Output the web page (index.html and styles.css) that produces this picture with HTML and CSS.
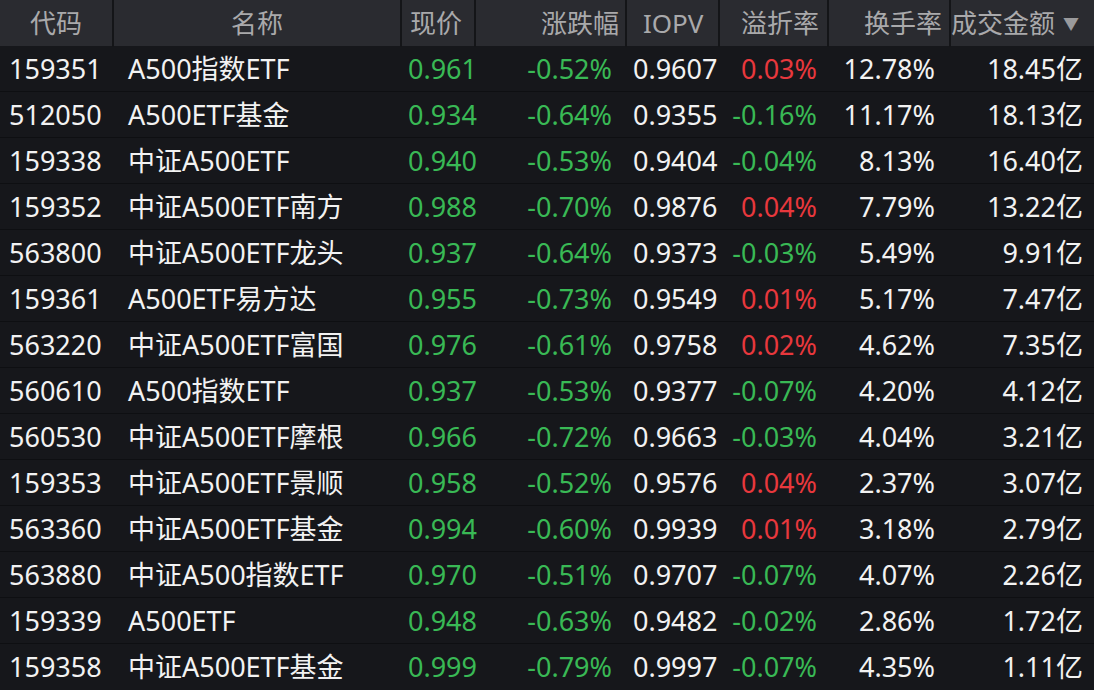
FILE: index.html
```html
<!DOCTYPE html>
<html lang="zh-CN">
<head>
<meta charset="utf-8">
<title>A500 ETF</title>
<link rel="stylesheet" href="styles.css">
</head>
<body>
<div class="table">
  <div class="row head">
    <div class="c code hc">代码</div>
    <div class="c name hc">名称</div>
    <div class="c price hl">现价</div>
    <div class="c chg hr">涨跌幅</div>
    <div class="c iopv hl">IOPV</div>
    <div class="c prem hr">溢折率</div>
    <div class="c turn hr">换手率</div>
    <div class="c amt hl">成交金额<span class="sort">▼</span></div>
  </div>
  <div class="row"><div class="c code">159351</div><div class="c name">A500指数ETF</div><div class="c price g">0.961</div><div class="c chg g">-0.52%</div><div class="c iopv">0.9607</div><div class="c prem r">0.03%</div><div class="c turn">12.78%</div><div class="c amt">18.45亿</div></div>
  <div class="row"><div class="c code">512050</div><div class="c name">A500ETF基金</div><div class="c price g">0.934</div><div class="c chg g">-0.64%</div><div class="c iopv">0.9355</div><div class="c prem g">-0.16%</div><div class="c turn">11.17%</div><div class="c amt">18.13亿</div></div>
  <div class="row"><div class="c code">159338</div><div class="c name">中证A500ETF</div><div class="c price g">0.940</div><div class="c chg g">-0.53%</div><div class="c iopv">0.9404</div><div class="c prem g">-0.04%</div><div class="c turn">8.13%</div><div class="c amt">16.40亿</div></div>
  <div class="row"><div class="c code">159352</div><div class="c name">中证A500ETF南方</div><div class="c price g">0.988</div><div class="c chg g">-0.70%</div><div class="c iopv">0.9876</div><div class="c prem r">0.04%</div><div class="c turn">7.79%</div><div class="c amt">13.22亿</div></div>
  <div class="row"><div class="c code">563800</div><div class="c name">中证A500ETF龙头</div><div class="c price g">0.937</div><div class="c chg g">-0.64%</div><div class="c iopv">0.9373</div><div class="c prem g">-0.03%</div><div class="c turn">5.49%</div><div class="c amt">9.91亿</div></div>
  <div class="row"><div class="c code">159361</div><div class="c name">A500ETF易方达</div><div class="c price g">0.955</div><div class="c chg g">-0.73%</div><div class="c iopv">0.9549</div><div class="c prem r">0.01%</div><div class="c turn">5.17%</div><div class="c amt">7.47亿</div></div>
  <div class="row"><div class="c code">563220</div><div class="c name">中证A500ETF富国</div><div class="c price g">0.976</div><div class="c chg g">-0.61%</div><div class="c iopv">0.9758</div><div class="c prem r">0.02%</div><div class="c turn">4.62%</div><div class="c amt">7.35亿</div></div>
  <div class="row"><div class="c code">560610</div><div class="c name">A500指数ETF</div><div class="c price g">0.937</div><div class="c chg g">-0.53%</div><div class="c iopv">0.9377</div><div class="c prem g">-0.07%</div><div class="c turn">4.20%</div><div class="c amt">4.12亿</div></div>
  <div class="row"><div class="c code">560530</div><div class="c name">中证A500ETF摩根</div><div class="c price g">0.966</div><div class="c chg g">-0.72%</div><div class="c iopv">0.9663</div><div class="c prem g">-0.03%</div><div class="c turn">4.04%</div><div class="c amt">3.21亿</div></div>
  <div class="row"><div class="c code">159353</div><div class="c name">中证A500ETF景顺</div><div class="c price g">0.958</div><div class="c chg g">-0.52%</div><div class="c iopv">0.9576</div><div class="c prem r">0.04%</div><div class="c turn">2.37%</div><div class="c amt">3.07亿</div></div>
  <div class="row"><div class="c code">563360</div><div class="c name">中证A500ETF基金</div><div class="c price g">0.994</div><div class="c chg g">-0.60%</div><div class="c iopv">0.9939</div><div class="c prem r">0.01%</div><div class="c turn">3.18%</div><div class="c amt">2.79亿</div></div>
  <div class="row"><div class="c code">563880</div><div class="c name">中证A500指数ETF</div><div class="c price g">0.970</div><div class="c chg g">-0.51%</div><div class="c iopv">0.9707</div><div class="c prem g">-0.07%</div><div class="c turn">4.07%</div><div class="c amt">2.26亿</div></div>
  <div class="row"><div class="c code">159339</div><div class="c name">A500ETF</div><div class="c price g">0.948</div><div class="c chg g">-0.63%</div><div class="c iopv">0.9482</div><div class="c prem g">-0.02%</div><div class="c turn">2.86%</div><div class="c amt">1.72亿</div></div>
  <div class="row"><div class="c code">159358</div><div class="c name">中证A500ETF基金</div><div class="c price g">0.999</div><div class="c chg g">-0.79%</div><div class="c iopv">0.9997</div><div class="c prem g">-0.07%</div><div class="c turn">4.35%</div><div class="c amt">1.11亿</div></div>
</div>
</body>
</html>
```
FILE: styles.css
```css
html, body {
  margin: 0;
  padding: 0;
  background: #16171b;
}
body {
  width: 1094px;
  height: 690px;
  overflow: hidden;
  font-family: "Noto Sans", "Noto Sans CJK SC", sans-serif;
  color: #f2f2f2;
}
.table {
  display: flex;
  flex-direction: column;
}
.row {
  display: grid;
  grid-template-columns: 114px 288px 74px 151px 93px 109px 122px 143px;
  height: 46px;
  box-sizing: border-box;
  border-bottom: 1px solid #0e0f12;
  font-size: 27px;
  line-height: 45px;
  white-space: nowrap;
}
.row:last-child {
  border-bottom: none;
}
.c {
  box-sizing: border-box;
  overflow: visible;
}
.head {
  background: #2a2b30;
  color: #a9a9ab;
  border-bottom: none;
  height: 46px;
  line-height: 46px;
  font-size: 26px;
}
.head .c {
  border-right: 2px solid #141518;
}
.head .c:last-child {
  border-right: none;
}
.hc { text-align: center; }
.hl { text-align: left; }
.hr { text-align: right; }

.code { padding-left: 9px; }
.name { padding-left: 14px; }
.price { padding-left: 6px; }
.chg { text-align: right; padding-right: 15px; }
.iopv { padding-left: 6px; }
.prem { text-align: right; padding-right: 12px; }
.turn { text-align: right; padding-right: 16px; }
.amt { text-align: right; padding-right: 11px; }

.head .price { padding-left: 8px; }
.head .chg { padding-right: 6px; }
.head .iopv { padding-left: 16px; }
.head .prem { padding-right: 8px; }
.head .turn { padding-right: 7px; }
.head .amt { padding-left: 0; padding-right: 0; text-align: left; }
.head .code, .head .name { padding-left: 0; }

.sort {
  font-size: 16px;
  color: #9a9a9c;
  margin-left: 8px;
  vertical-align: 3px;
}
.g { color: #39b955; }
.r { color: #e8383d; }
```
